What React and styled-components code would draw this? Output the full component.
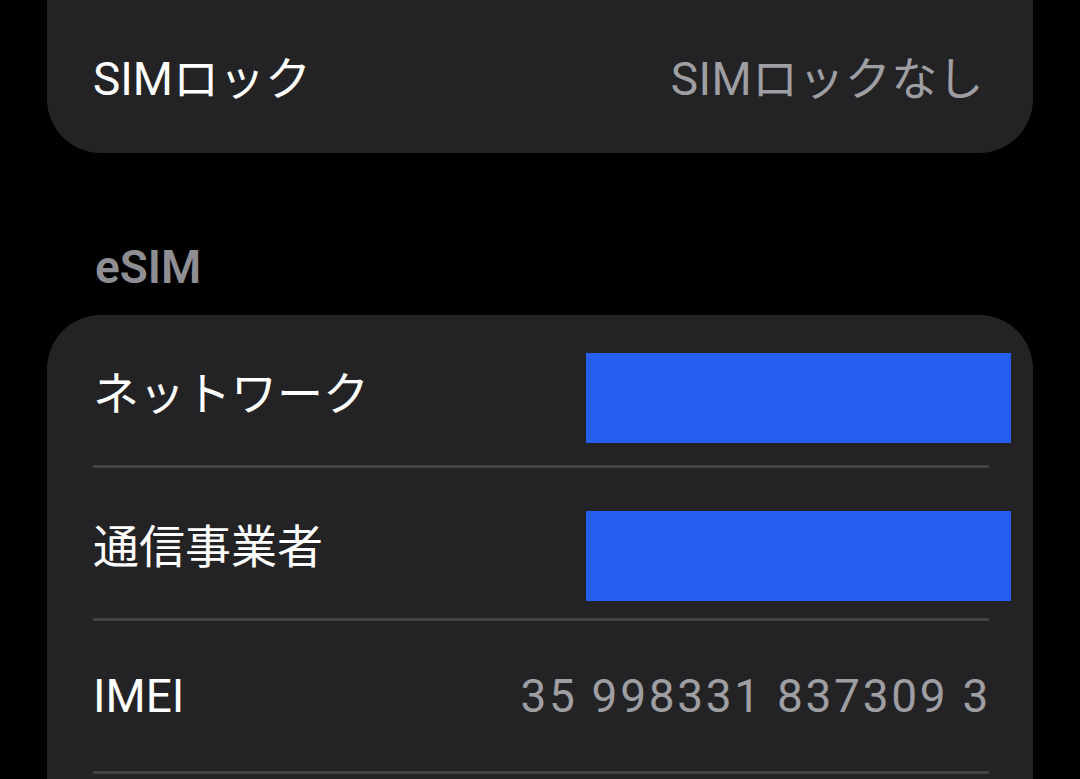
import React from 'react';
import styled, { createGlobalStyle } from 'styled-components';

const GlobalStyle = createGlobalStyle`
  html, body {
    margin: 0;
    padding: 0;
    background: #000;
    overflow: hidden;
  }
  body {
    font-family: Roboto, "Noto Sans CJK JP", sans-serif;
    -webkit-font-smoothing: antialiased;
  }
`;

const esimRows = [
  { label: 'ネットワーク', redacted: true, shift: 16 },
  { label: '通信事業者', redacted: true, shift: 26 },
  { label: 'IMEI', value: '35 998331 837309 3' },
];

const App = () => {
  return (
    <Page>
      <GlobalStyle />
      <Card $top>
        <Row>
          <RowInner $last>
            <Label>SIMロック</Label>
            <Value>SIMロックなし</Value>
          </RowInner>
        </Row>
      </Card>

      <SectionHeader>eSIM</SectionHeader>
      <Card $open>
        {esimRows.map((row) => (
          <Row key={row.label}>
            <RowInner>
              <Label>{row.label}</Label>
              {row.redacted ? (
                <Redaction $shift={row.shift} />
              ) : (
                <Value $digits>{row.value}</Value>
              )}
            </RowInner>
          </Row>
        ))}
      </Card>
    </Page>
  );
};

export default App;

const Page = styled.div`
  padding: 0 47px;
  width: 1080px;
  box-sizing: border-box;
`;

const Card = styled.div`
  background: #232325;
  border-radius: ${(p) => (p.$top ? '0 0 54px 54px' : '54px')};
  padding-bottom: ${(p) => (p.$open ? '80px' : '0')};
  overflow: hidden;
`;

const Row = styled.div`
  padding: 0 44px 0 46px;
`;

const RowInner = styled.div`
  height: 150px;
  display: flex;
  align-items: center;
  justify-content: space-between;
  border-bottom: 3px solid ${(p) => (p.$last ? 'transparent' : '#424244')};
`;

const Label = styled.span`
  font-size: 46px;
  color: #ffffff;
  white-space: nowrap;
`;

const Value = styled.span`
  font-size: 46px;
  color: #9e9ea3;
  white-space: nowrap;
  letter-spacing: ${(p) => (p.$digits ? '2.7px' : '0.4px')};
  margin-right: ${(p) => (p.$digits ? '-2px' : '5px')};
`;

const Redaction = styled.div`
  width: 425px;
  height: 90px;
  background: #265ef0;
  margin-right: -22px;
  margin-top: ${(p) => p.$shift}px;
`;

const SectionHeader = styled.div`
  padding: 86px 0 20px 48px;
  font-size: 46px;
  line-height: 56px;
  font-weight: 600;
  color: #8e8e93;
`;
